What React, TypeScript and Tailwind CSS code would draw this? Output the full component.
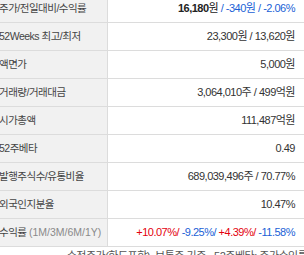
import type { FC, ReactNode } from "react";

const BLUE = "text-[#1a5fd6]";
const RED = "text-[#e4000e]";

interface RowProps {
  label: ReactNode;
  children: ReactNode;
}

const Row: FC<RowProps> = ({ label, children }) => (
  <div className="flex h-[28px] border-b border-[#dcdcdc]">
    <div className="flex w-[119px] shrink-0 items-center border-r border-[#dcdcdc] bg-[#f1f1f1] pl-[10px] text-[10.5px] tracking-[-0.5px] text-[#444]">
      {label}
    </div>
    <div className="flex flex-1 items-center justify-end pr-[14px] tracking-[-0.5px] text-[#333]">
      {children}
    </div>
  </div>
);

export default function App() {
  return (
    <div className="h-[255px] w-[304px] overflow-hidden bg-white font-['Liberation_Sans','Noto_Sans_CJK_KR',sans-serif] text-[11px]">
      <div className="-ml-[11px] -mt-[5px] w-[320px]">
        <Row label="주가/전일대비/수익률">
          <span className="font-bold text-[#222]">16,180</span>
          <span className="text-[#222]">원</span>
          <span className={BLUE}>&nbsp;/ -340원 / -2.06%</span>
        </Row>
        <Row label="52Weeks 최고/최저">23,300원 / 13,620원</Row>
        <Row label="액면가">5,000원</Row>
        <Row label="거래량/거래대금">3,064,010주 / 499억원</Row>
        <Row label="시가총액">111,487억원</Row>
        <Row label="52주베타">0.49</Row>
        <Row label="발행주식수/유통비율">689,039,496주 / 70.77%</Row>
        <Row label="외국인지분율">10.47%</Row>
        <Row
          label={
            <>
              수익률&nbsp;<span className="tracking-normal text-[#8a8a8a]">(1M/3M/6M/1Y)</span>
            </>
          }
        >
          <span className={RED}>+10.07%/</span>
          <span className={BLUE}>&nbsp;-9.25%/</span>
          <span className={RED}>&nbsp;+4.39%/</span>
          <span className={BLUE}>&nbsp;-11.58%</span>
        </Row>
        <p className="pl-[72px] pt-[1px] tracking-[-0.5px] whitespace-nowrap text-[#555]">
          · 수정주가(한도포함), 보통주 기준 · 52주베타: 주가수익률 기준
        </p>
      </div>
    </div>
  );
}
